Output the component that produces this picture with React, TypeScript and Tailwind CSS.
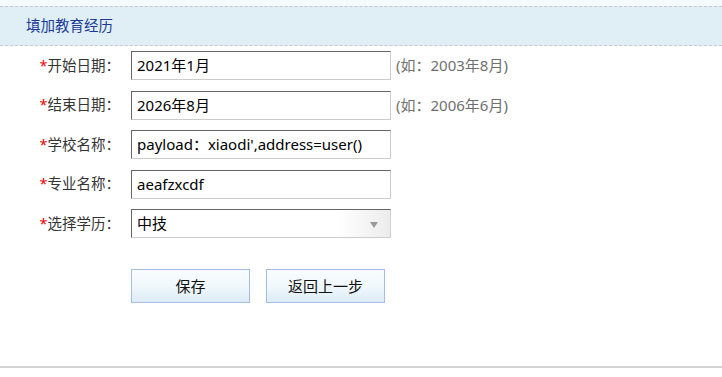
import React from 'react';

const font = { fontFamily: '"Noto Sans", "Noto Sans CJK SC", sans-serif' };

interface RowProps {
  label: string;
  children: React.ReactNode;
  hint?: string;
}

function FormRow({ label, children, hint }: RowProps) {
  return (
    <div className="flex items-center h-[29px]">
      <div className="w-[121px] text-right text-[14.5px] text-[#333] pr-[1px]">
        <span className="text-[#e00]">*</span>
        {label}：
      </div>
      <div className="ml-[10px]">{children}</div>
      {hint && <span className="ml-[5px] text-[15px] text-[#6f6f6f]">{hint}</span>}
    </div>
  );
}

function TextBox({ value }: { value: string }) {
  return (
    <div className="w-[260px] h-[29px] flex items-center px-[5px] text-[15px] text-black bg-white border border-t-[#666] border-l-[#666] border-b-[#ccc] border-r-[#ccc] whitespace-nowrap overflow-hidden">
      {value}
    </div>
  );
}

function SelectBox({ value }: { value: string }) {
  return (
    <div className="relative w-[260px] h-[29px] flex items-center px-[5px] text-[15px] text-black bg-gradient-to-r from-white via-white via-80% to-[#ececec] border border-t-[#666] border-l-[#666] border-b-[#ccc] border-r-[#ccc]">
      {value}
      <span className="absolute right-[12px] top-[12px] w-0 h-0 border-l-[4px] border-r-[4px] border-t-[6px] border-l-transparent border-r-transparent border-t-[#999]" />
    </div>
  );
}

function Btn({ text }: { text: string }) {
  return (
    <button className="w-[119px] h-[34px] text-[15px] text-[#111] border border-[#a3bce4] bg-gradient-to-b from-[#f9fdff] via-[#f1f8fc] to-[#dcecf5]">
      {text}
    </button>
  );
}

export default function App() {
  return (
    <div className="w-[722px] h-[377px] bg-white relative" style={font}>
      <div className="h-[6px] bg-[#f5fafd]" />
      <div className="h-[40px] bg-[#e0eff5] border-y border-dashed border-[#c8c8c8] flex items-center pl-[26px] text-[14.5px] text-[#1b3a96]">
        填加教育经历
      </div>
      <div className="flex flex-col gap-[10.5px] pt-[5px]">
        <FormRow label="开始日期" hint="(如：2003年8月)">
          <TextBox value="2021年1月" />
        </FormRow>
        <FormRow label="结束日期" hint="(如：2006年6月)">
          <TextBox value="2026年8月" />
        </FormRow>
        <FormRow label="学校名称">
          <TextBox value="payload：xiaodi',address=user()" />
        </FormRow>
        <FormRow label="专业名称">
          <TextBox value="aeafzxcdf" />
        </FormRow>
        <FormRow label="选择学历">
          <SelectBox value="中技" />
        </FormRow>
      </div>
      <div className="flex gap-[16px] pl-[131px] mt-[31px]">
        <Btn text="保存" />
        <Btn text="返回上一步" />
      </div>
      <div className="absolute left-0 right-0 top-[366px] h-[2px] bg-[#d4d4d4]" />
    </div>
  );
}
